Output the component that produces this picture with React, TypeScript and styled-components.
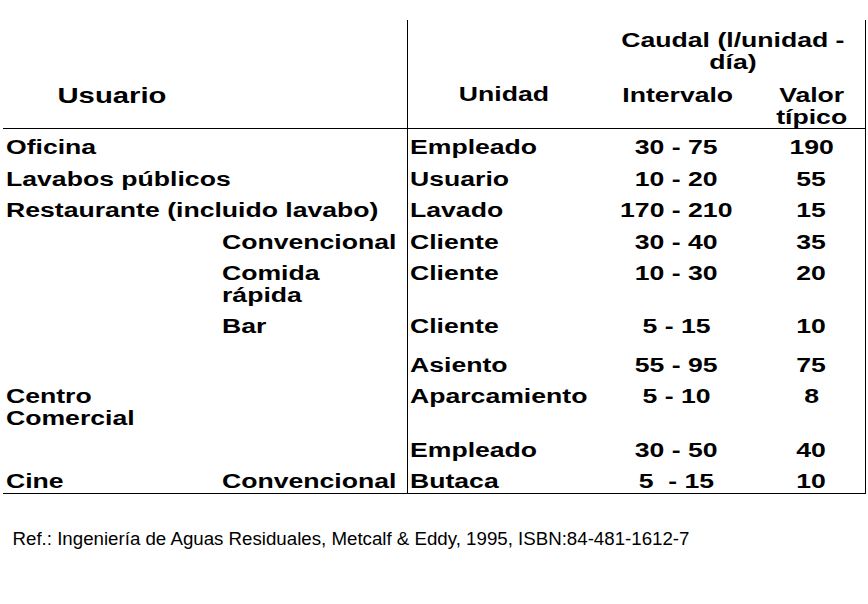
import React from "react";
import styled, { createGlobalStyle } from "styled-components";

const Global = createGlobalStyle`
  html, body { margin: 0; padding: 0; background: #fff; }
  body { font-family: "Liberation Sans", Arial, sans-serif; color: #000; }
`;

const COLS = "217px 187px 193px 155px 110px";

const Page = styled.div`
  width: 868px;
  height: 604px;
  padding-top: 20px;
  box-sizing: border-box;
`;

const Table = styled.div`
  margin-left: 3px;
  width: 863px;
  box-sizing: border-box;
  border-right: 1px solid #000;
  border-bottom: 1px solid #000;
  font-weight: bold;
  font-size: 20px;
  line-height: 22px;
`;

/* the table text in the reference is drawn horizontally widened */
const Txt = styled.span<{ $center?: boolean }>`
  display: inline-block;
  white-space: pre;
  transform: scaleX(1.33);
  transform-origin: ${(p) => (p.$center ? "center" : "left")} center;
`;

const Header = styled.div`
  display: grid;
  grid-template-columns: ${COLS};
  grid-template-rows: auto auto;
  height: 108px;
  border-bottom: 1px solid #000;
`;

const UserHead = styled.div`
  grid-column: 1;
  grid-row: 1 / 3;
  padding-top: 64px;
  text-align: center;
  font-size: 22px;
  line-height: 24px;
`;

const UnitHead = styled.div`
  grid-column: 3;
  grid-row: 1 / 3;
  border-left: 1px solid #000;
  padding-top: 63px;
  text-align: center;
`;

const FlowHead = styled.div`
  grid-column: 4 / 6;
  grid-row: 1;
  padding: 9px 0 10px;
  text-align: center;
`;

const SubHead = styled.div<{ $col: number; $pad?: number }>`
  grid-column: ${(p) => p.$col};
  grid-row: 2;
  text-align: center;
  padding-left: ${(p) => p.$pad ?? 0}px;
`;

const Row = styled.div<{ $h: number }>`
  display: grid;
  grid-template-columns: ${COLS};
  height: ${(p) => p.$h}px;
`;

const Cell = styled.div`
  padding-top: 7px;
  padding-left: 3px;
`;

const SubCell = styled.div`
  padding-top: 7px;
  padding-left: 2px;
`;

const UnitCell = styled.div`
  border-left: 1px solid #000;
  padding-top: 7px;
  padding-left: 2px;
`;

const RangeCell = styled.div`
  padding-top: 7px;
  padding-right: 2px;
  text-align: center;
`;

const TypCell = styled.div`
  padding-top: 7px;
  padding-left: 3px;
  text-align: center;
`;

const Note = styled.div`
  margin-top: 34px;
  padding-left: 12.5px;
  font-size: 18.7px;
  line-height: 22px;
`;

type R = {
  h: number;
  user?: string;
  sub?: string;
  unit: string;
  range: string;
  typ: string;
};

const rows: R[] = [
  { h: 32, user: "Oficina", unit: "Empleado", range: "30 - 75", typ: "190" },
  { h: 31, user: "Lavabos públicos", unit: "Usuario", range: "10 - 20", typ: "55" },
  { h: 32, user: "Restaurante (incluido lavabo)", unit: "Lavado", range: "170 - 210", typ: "15" },
  { h: 31, sub: "Convencional", unit: "Cliente", range: "30 - 40", typ: "35" },
  { h: 53, sub: "Comida\nrápida", unit: "Cliente", range: "10 - 30", typ: "20" },
  { h: 39, sub: "Bar", unit: "Cliente", range: "5 - 15", typ: "10" },
  { h: 31, unit: "Asiento", range: "55 - 95", typ: "75" },
  { h: 54, user: "Centro\nComercial", unit: "Aparcamiento", range: "5 - 10", typ: "8" },
  { h: 31, unit: "Empleado", range: "30 - 50", typ: "40" },
  { h: 30, user: "Cine", sub: "Convencional", unit: "Butaca", range: "5  - 15", typ: "10" },
];

export default function App() {
  return (
    <Page>
      <Global />
      <Table>
        <Header>
          <UserHead>
            <Txt $center>Usuario</Txt>
          </UserHead>
          <UnitHead>
            <Txt $center>Unidad</Txt>
          </UnitHead>
          <FlowHead>
            <Txt $center>{"Caudal (l/unidad -\ndía)"}</Txt>
          </FlowHead>
          <SubHead $col={4}>
            <Txt $center>Intervalo</Txt>
          </SubHead>
          <SubHead $col={5} $pad={3}>
            <Txt $center>{"Valor\ntípico"}</Txt>
          </SubHead>
        </Header>
        {rows.map((r, i) => (
          <Row key={i} $h={r.h}>
            <Cell>{r.user && <Txt>{r.user}</Txt>}</Cell>
            <SubCell>{r.sub && <Txt>{r.sub}</Txt>}</SubCell>
            <UnitCell>
              <Txt>{r.unit}</Txt>
            </UnitCell>
            <RangeCell>
              <Txt $center>{r.range}</Txt>
            </RangeCell>
            <TypCell>
              <Txt $center>{r.typ}</Txt>
            </TypCell>
          </Row>
        ))}
      </Table>
      <Note>Ref.: Ingeniería de Aguas Residuales, Metcalf &amp; Eddy, 1995, ISBN:84-481-1612-7</Note>
    </Page>
  );
}
